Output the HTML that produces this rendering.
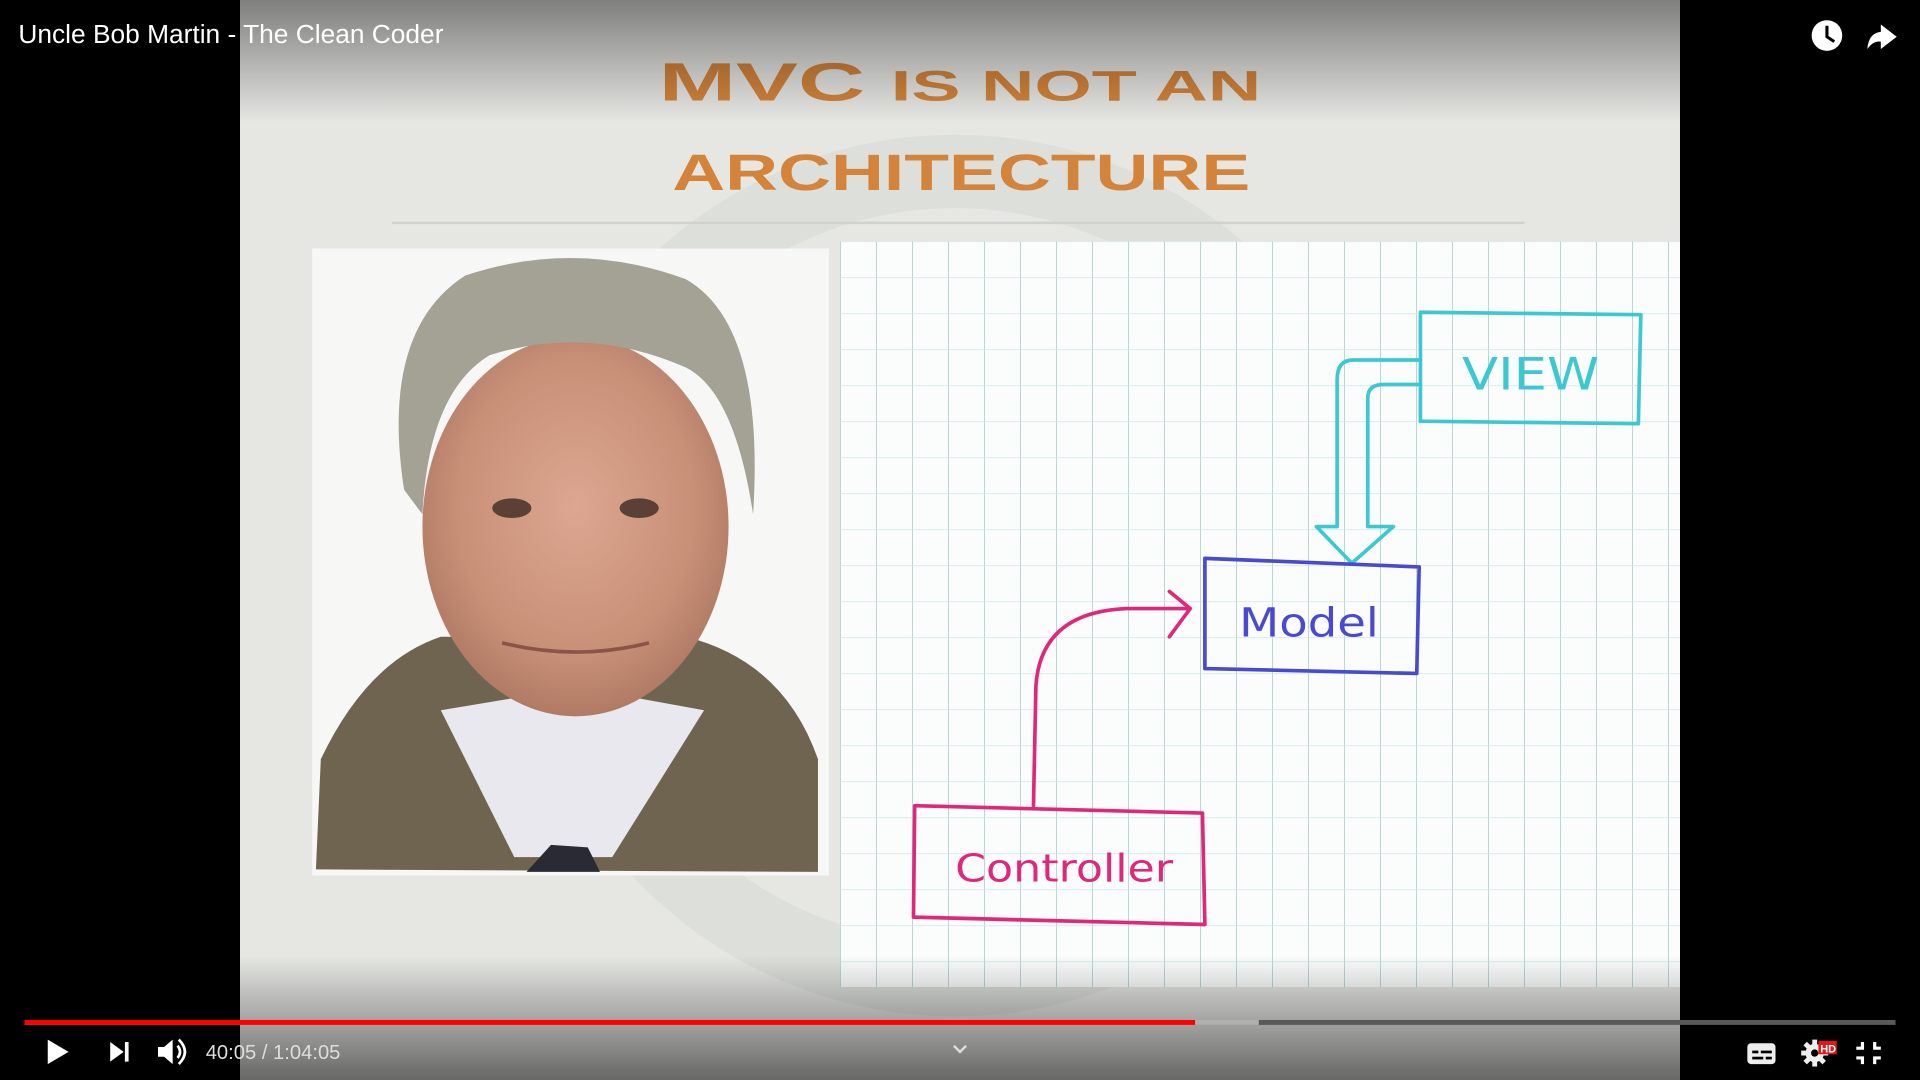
<!DOCTYPE html>
<html><head><meta charset="utf-8"><style>
html,body{margin:0;padding:0;background:#000;width:1920px;height:1080px;overflow:hidden}
svg{display:block}
</style></head><body>
<svg width="1920" height="1080" viewBox="0 0 1568 882" xmlns="http://www.w3.org/2000/svg" font-family="Liberation Sans, sans-serif">
<defs>
<pattern id="grid" x="686" y="197" width="29.4" height="29.4" patternUnits="userSpaceOnUse">
<rect width="29.4" height="29.4" fill="#fbfdfd"/>
<path d="M0 0V29.4" stroke="#b8d6d6" stroke-width="1.6"/>
<path d="M0 0H29.4" stroke="#cfe6e6" stroke-width="1.2"/>
</pattern>
<linearGradient id="topfade" x1="0" y1="0" x2="0" y2="1">
<stop offset="0" stop-color="#000" stop-opacity="0.45"/><stop offset="1" stop-color="#000" stop-opacity="0"/>
</linearGradient>
<linearGradient id="botfade" x1="0" y1="0" x2="0" y2="1">
<stop offset="0" stop-color="#000" stop-opacity="0"/><stop offset="1" stop-color="#000" stop-opacity="0.55"/>
</linearGradient>
<radialGradient id="face" cx="0.5" cy="0.45" r="0.55">
<stop offset="0" stop-color="#dca690"/><stop offset="0.7" stop-color="#c99078"/><stop offset="1" stop-color="#b07a64"/>
</radialGradient>
</defs>
<rect width="1568" height="882" fill="#000"/>
<!-- slide -->
<rect x="196" y="0" width="1176" height="882" fill="#e6e7e3"/>
<circle cx="780" cy="470" r="330" fill="none" stroke="#d9dcd7" stroke-width="60" opacity="0.7"/>
<text x="538" y="82" font-size="44" fill="#d4843a" font-weight="bold" textLength="492" lengthAdjust="spacingAndGlyphs">MVC <tspan font-size="35">IS NOT AN</tspan></text>
<text x="549" y="155" font-size="42" fill="#d4843a" font-weight="bold" textLength="472" lengthAdjust="spacingAndGlyphs">ARCHITECTURE</text>
<line x1="320" y1="182" x2="1245" y2="182" stroke="#cfd2ce" stroke-width="2"/>
<!-- photo -->
<rect x="255" y="203" width="422" height="512" fill="#f7f7f5"/>
<path d="M258 710 L262 620 Q300 540 360 520 L560 520 Q640 540 668 620 L668 712 Z" fill="#6e6450"/>
<path d="M360 580 L420 700 L500 700 L575 580 L520 570 L420 570Z" fill="#e8e8ee"/>
<path d="M430 712 L450 690 L480 692 L490 712Z" fill="#2a2a35"/>
<ellipse cx="470" cy="430" rx="125" ry="155" fill="url(#face)"/>
<path d="M330 400 Q310 270 380 225 Q470 195 560 228 Q625 265 615 420 Q600 320 560 300 Q480 265 400 290 Q350 320 345 420Z" fill="#a3a294"/>
<ellipse cx="418" cy="415" rx="16" ry="8" fill="#5a4035"/>
<ellipse cx="522" cy="415" rx="16" ry="8" fill="#5a4035"/>
<path d="M410 525 Q470 540 530 525" stroke="#8a5548" stroke-width="3" fill="none"/>
<!-- grid -->
<rect x="686" y="197" width="686" height="609" fill="url(#grid)"/>
<!-- diagram -->
<g fill="none" stroke-linecap="round" stroke-linejoin="round">
<path d="M1160 255 L1340 257 L1338 346 L1160 344 Z" stroke="#3cc8d0" stroke-width="3"/>
<path d="M1160 294 L1105 294 Q1092 294 1092 310 L1092 430 L1075 430 L1104 460 L1138 430 L1117 430 L1117 325 Q1117 314 1130 314 L1160 314" stroke="#3cc8d0" stroke-width="3"/>
<path d="M984 456 L1159 463 L1157 550 L984 546 Z" stroke="#4a4ad0" stroke-width="3"/>
<path d="M747 658 L982 664 L984 755 L746 749 Z" stroke="#e0287a" stroke-width="3"/>
<path d="M844 658 L846 560 Q850 500 920 497 L970 497 M955 483 L972 497 L955 520" stroke="#e0287a" stroke-width="3"/>
</g>
<text x="1194" y="318" font-size="36" fill="#3cc8d0" font-family="DejaVu Sans, sans-serif" textLength="112" lengthAdjust="spacingAndGlyphs">VIEW</text>
<text x="1012" y="520" font-size="33" fill="#4a4ad0" font-family="DejaVu Sans, sans-serif" textLength="114" lengthAdjust="spacingAndGlyphs">Model</text>
<text x="780" y="720" font-size="31" fill="#e0287a" font-family="DejaVu Sans, sans-serif" textLength="178" lengthAdjust="spacingAndGlyphs">Controller</text>
<!-- overlays -->
<rect x="0" y="0" width="1568" height="100" fill="url(#topfade)"/>
<rect x="0" y="780" width="1568" height="102" fill="url(#botfade)"/>
<text x="15" y="35" font-size="21.5" fill="#fff">Uncle Bob Martin - The Clean Coder</text>
<!-- clock -->
<circle cx="1492" cy="29" r="12.5" fill="#fff"/>
<path d="M1492 21 V30 L1498 34" stroke="#000" stroke-width="2.5" fill="none"/>
<!-- share -->
<path d="M1536 20 L1549 30 L1536 40 L1536 34 Q1530 33 1525 40 Q1526 27 1536 26Z" fill="#fff"/>
<!-- progress -->
<rect x="20" y="833" width="1528" height="4" fill="#5a5a5a"/>
<rect x="20" y="833" width="1008" height="4" fill="#b0b0b0"/>
<rect x="20" y="833" width="956" height="4" fill="#f00"/>
<!-- controls -->
<path d="M39 849 L56 859 L39 869Z" fill="#fff"/>
<path d="M90 851 L101 859 L90 867Z M102 851 H105 V867 H102Z" fill="#fff"/>
<path d="M129 855 H134 L141 849 V869 L134 863 H129Z" fill="#fff"/>
<path d="M145 854 Q149 859 145 864 M146 849 Q156 859 146 869" stroke="#fff" stroke-width="2.2" fill="none"/>
<text x="168" y="865" font-size="16.5" fill="#ddd">40:05 / 1:04:05</text>
<path d="M779 854 L784 859 L789 854" stroke="#ddd" stroke-width="2" fill="none"/>
<rect x="1427" y="852" width="23" height="17" rx="3" fill="#eee"/>
<rect x="1431" y="858" width="5" height="2.2" fill="#000"/><rect x="1438" y="858" width="9" height="2.2" fill="#000"/>
<rect x="1431" y="863" width="9" height="2.2" fill="#000"/><rect x="1442" y="863" width="5" height="2.2" fill="#000"/>
<g fill="#eee">
<circle cx="1482" cy="860" r="7.5"/>
<rect x="1480" y="849" width="4" height="22"/>
<rect x="1471" y="858" width="22" height="4"/>
<rect x="1480" y="849" width="4" height="22" transform="rotate(45 1482 860)"/>
<rect x="1480" y="849" width="4" height="22" transform="rotate(-45 1482 860)"/>
</g>
<circle cx="1482" cy="860" r="3" fill="#000"/>
<rect x="1485" y="850" width="15" height="11" fill="#e3161b"/>
<text x="1486.5" y="859.5" font-size="9" font-weight="bold" fill="#fff">HD</text>
<path d="M1521 851 V856 H1516 M1531 851 V856 H1536 M1521 869 V864 H1516 M1531 869 V864 H1536" stroke="#fff" stroke-width="2.6" fill="none"/>
</svg>
</body></html>
